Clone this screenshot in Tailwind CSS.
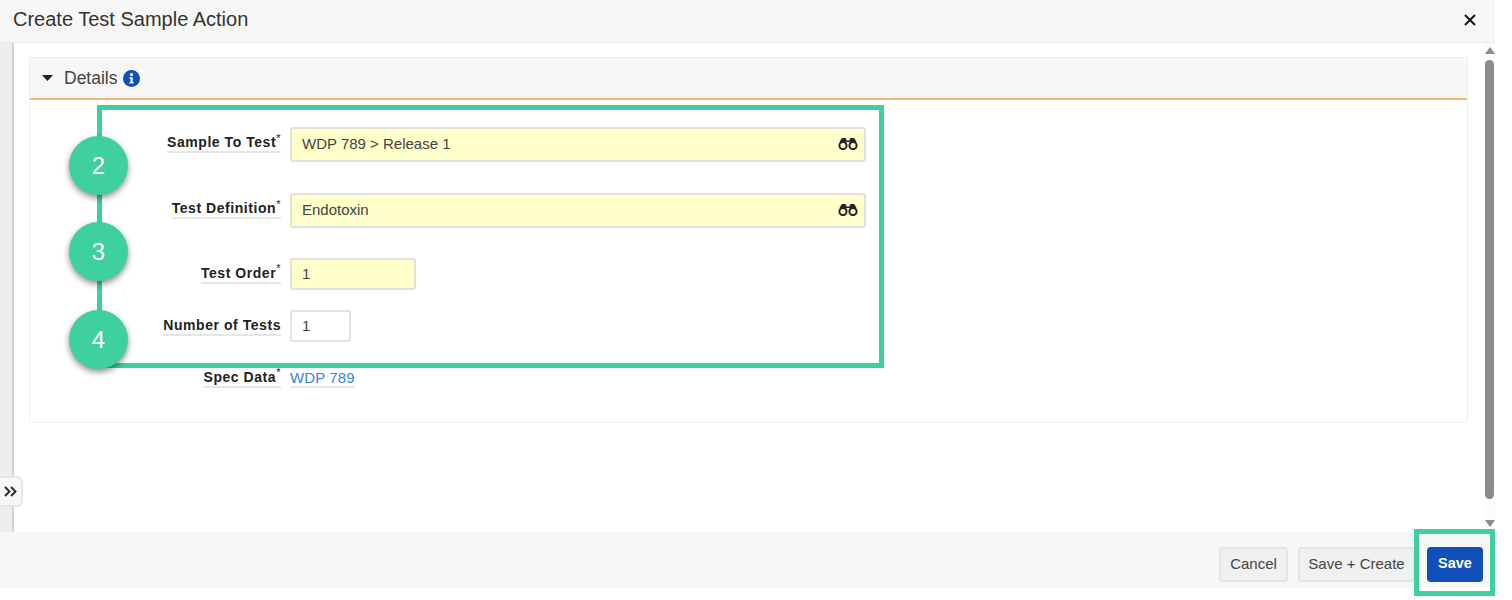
<!DOCTYPE html>
<html lang="en">
<head>
  <meta charset="UTF-8">
  <meta name="viewport" content="width=device-width, initial-scale=1.0">
  <title>Create Test Sample Action</title>
  <script src="https://cdn.jsdelivr.net/npm/@tailwindcss/browser@4"></script>
</head>
<body class="bg-white font-['Liberation_Sans',Arial,sans-serif] text-[#333]">
  <div class="relative w-[1495px] h-[600px] overflow-hidden">

    <!-- Header -->
    <div class="h-[43px] bg-[#f7f7f7] border-b border-[#e9e9e9] flex items-center justify-between pl-[13px] pr-[19px]">
      <h1 class="text-[20px] leading-[38px] pb-[5px] text-[#333]">Create Test Sample Action</h1>
      <svg class="w-3 h-3 mb-[2px]" viewBox="0 0 12 12" fill="none" stroke="#1a1a1a" stroke-width="2"><path d="M1 1l10 10M11 1L1 11"/></svg>
    </div>

    <!-- Body -->
    <div class="h-[489px] flex">
      <div class="w-[14px] bg-[#eeeeee] border-r-2 border-[#d4d4d4] shrink-0"></div>

      <div class="flex-1 pl-[15px] pr-[17px] pt-[14px]">
        <!-- Details panel -->
        <div class="h-[366px] border border-[#eeeeee] rounded-[2px] -mr-[1px]">
          <div class="h-[42px] bg-[#f7f7f7] border-b-2 border-[#f5b976] flex items-center pl-[12px]">
            <svg class="w-[11px] h-[6px]" viewBox="0 0 11 6" fill="#222"><path d="M0 0h11L5.5 6z"/></svg>
            <span class="ml-[11px] text-[17.5px] text-[#444]">Details</span>
            <svg class="ml-[5px] w-[17px] h-[17px]" viewBox="0 0 17 17"><circle cx="8.5" cy="8.5" r="8.5" fill="#1150b8"/><circle cx="8.500" cy="4.6" r="1.6" fill="#fff"/><path d="M6.4 7.2h3.3v5h1.1v1.4H6.3v-1.4h1.2V8.6H6.4z" fill="#fff"/></svg>
          </div>

          <div class="pt-[27px]">
            <div class="flex items-center h-[35px]">
              <div class="w-[251px] flex justify-end pb-[2px]"><span class="text-[14px] leading-[17px] font-bold tracking-[0.55px] text-[#222] border-b-2 border-[#e6e6e6]">Sample To Test<sup class="text-[11px] font-normal leading-none">*</sup></span></div>
              <div class="ml-[9px] w-[576px] h-[35px] bg-[#ffffcc] border-2 border-[#e2e2dc] rounded-[3px] flex items-center justify-between pl-[10px] pr-[6px] text-[15px] text-[#444]">
                <span>WDP 789 &gt; Release 1</span>
                <svg class="w-[20px] h-[12px] mb-[2px]" viewBox="0 0 20 12" fill="none" stroke="#222" stroke-width="2"><circle cx="5" cy="7.500" r="3.6"/><circle cx="15" cy="7.500" r="3.6"/><path d="M2 4l2-3.500h3.500L8 3h4l.5-2.500H16l2 3.500" fill="#222" stroke-width="1"/></svg>
              </div>
            </div>

            <div class="flex items-center h-[35px] mt-[31px]">
              <div class="w-[251px] flex justify-end pb-[2px]"><span class="text-[14px] leading-[17px] font-bold tracking-[0.55px] text-[#222] border-b-2 border-[#e6e6e6]">Test Definition<sup class="text-[11px] font-normal leading-none">*</sup></span></div>
              <div class="ml-[9px] w-[576px] h-[35px] bg-[#ffffcc] border-2 border-[#e2e2dc] rounded-[3px] flex items-center justify-between pl-[10px] pr-[6px] text-[15px] text-[#444]">
                <span>Endotoxin</span>
                <svg class="w-[20px] h-[12px] mb-[2px]" viewBox="0 0 20 12" fill="none" stroke="#222" stroke-width="2"><circle cx="5" cy="7.500" r="3.6"/><circle cx="15" cy="7.500" r="3.6"/><path d="M2 4l2-3.500h3.500L8 3h4l.5-2.500H16l2 3.500" fill="#222" stroke-width="1"/></svg>
              </div>
            </div>

            <div class="flex items-center h-[32px] mt-[30px]">
              <div class="w-[251px] flex justify-end"><span class="text-[14px] leading-[17px] font-bold tracking-[0.55px] text-[#222] border-b-2 border-[#e6e6e6]">Test Order<sup class="text-[11px] font-normal leading-none">*</sup></span></div>
              <div class="ml-[9px] w-[126px] h-[32px] bg-[#ffffcc] border-2 border-[#e2e2dc] rounded-[3px] flex items-center pl-[10px] text-[15px] text-[#444]">1</div>
            </div>

            <div class="flex items-center h-[32px] mt-[20px]">
              <div class="w-[251px] flex justify-end"><span class="text-[14px] leading-[17px] font-bold tracking-[0.55px] text-[#222] border-b-2 border-[#e6e6e6]">Number of Tests</span></div>
              <div class="ml-[9px] w-[61px] h-[32px] bg-white border-2 border-[#e2e2e2] rounded-[3px] flex items-center pl-[10px] text-[15px] text-[#444]">1</div>
            </div>

            <div class="flex items-center h-[20px] mt-[26px]">
              <div class="w-[251px] flex justify-end"><span class="text-[14px] leading-[17px] font-bold tracking-[0.55px] text-[#222] border-b-2 border-[#e6e6e6]">Spec Data<sup class="text-[11px] font-normal leading-none">*</sup></span></div>
              <span class="ml-[9px] text-[15px] leading-[17px] tracking-[0.1px] text-[#3b84d8] border-b-2 border-[#e6e6e6]">WDP 789</span>
            </div>
          </div>
        </div>
      </div>

      <!-- Scrollbar -->
      <div class="w-[11px] shrink-0 flex flex-col items-center bg-[#fcfcfc]">
        <div class="mt-[4px] w-0 h-0 border-x-[5px] border-x-transparent border-b-[7px] border-b-[#8c8c8c]"></div>
        <div class="mt-[6px] w-[9px] h-[439px] bg-[#8c8c8c] rounded-full"></div>
        <div class="mt-[21px] w-0 h-0 border-x-[5px] border-x-transparent border-t-[7px] border-t-[#8c8c8c]"></div>
      </div>
    </div>

    <!-- Footer -->
    <div class="h-[56px] bg-[#f7f7f7] flex items-center justify-end gap-[10px] pt-[8px] pr-[12px] text-[15px]">
      <button class="h-[35px] w-[69px] bg-[#f0f0f0] border-2 border-[#e4e4e4] rounded-[4px] text-[#444]">Cancel</button>
      <button class="h-[35px] w-[117px] bg-[#f0f0f0] border-2 border-[#e4e4e4] rounded-[4px] text-[#444]">Save + Create</button>
      <button class="h-[35px] w-[56px] ml-[2px] bg-[#1150b8] rounded-[4px] font-bold text-[14.5px] text-white">Save</button>
    </div>

    <!-- Sidebar toggle -->
    <div class="absolute left-0 top-[476px] w-[23px] h-[31px] bg-[#f7f7f7] border-2 border-l-0 border-[#e6e6e6] rounded-r-[6px] flex items-center justify-center">
      <svg class="w-[13px] h-[11px]" viewBox="0 0 13 11" fill="none" stroke="#222" stroke-width="1.8"><path d="M1 1l4.500 4.500L1 10M7 1l4.500 4.500L7 10"/></svg>
    </div>

    <!-- Callout annotations -->
    <div class="absolute left-[97px] top-[105px] w-[787px] h-[263px] border-[5px] border-[#3fd09f]"></div>
    <div class="absolute left-[1414px] top-[529px] w-[81px] h-[67px] border-[5px] border-[#3fd09f]"></div>
    <div class="absolute left-[69px] top-[136px] w-[59px] h-[59px] rounded-full bg-[#3fd09f] shadow-[0_3px_6px_rgba(0,0,0,0.45)] flex items-center justify-center text-[24px] text-white">2</div>
    <div class="absolute left-[69px] top-[222px] w-[59px] h-[59px] rounded-full bg-[#3fd09f] shadow-[0_3px_6px_rgba(0,0,0,0.45)] flex items-center justify-center text-[24px] text-white">3</div>
    <div class="absolute left-[69px] top-[310px] w-[59px] h-[59px] rounded-full bg-[#3fd09f] shadow-[0_3px_6px_rgba(0,0,0,0.45)] flex items-center justify-center text-[24px] text-white">4</div>
  </div>
</body>
</html>
